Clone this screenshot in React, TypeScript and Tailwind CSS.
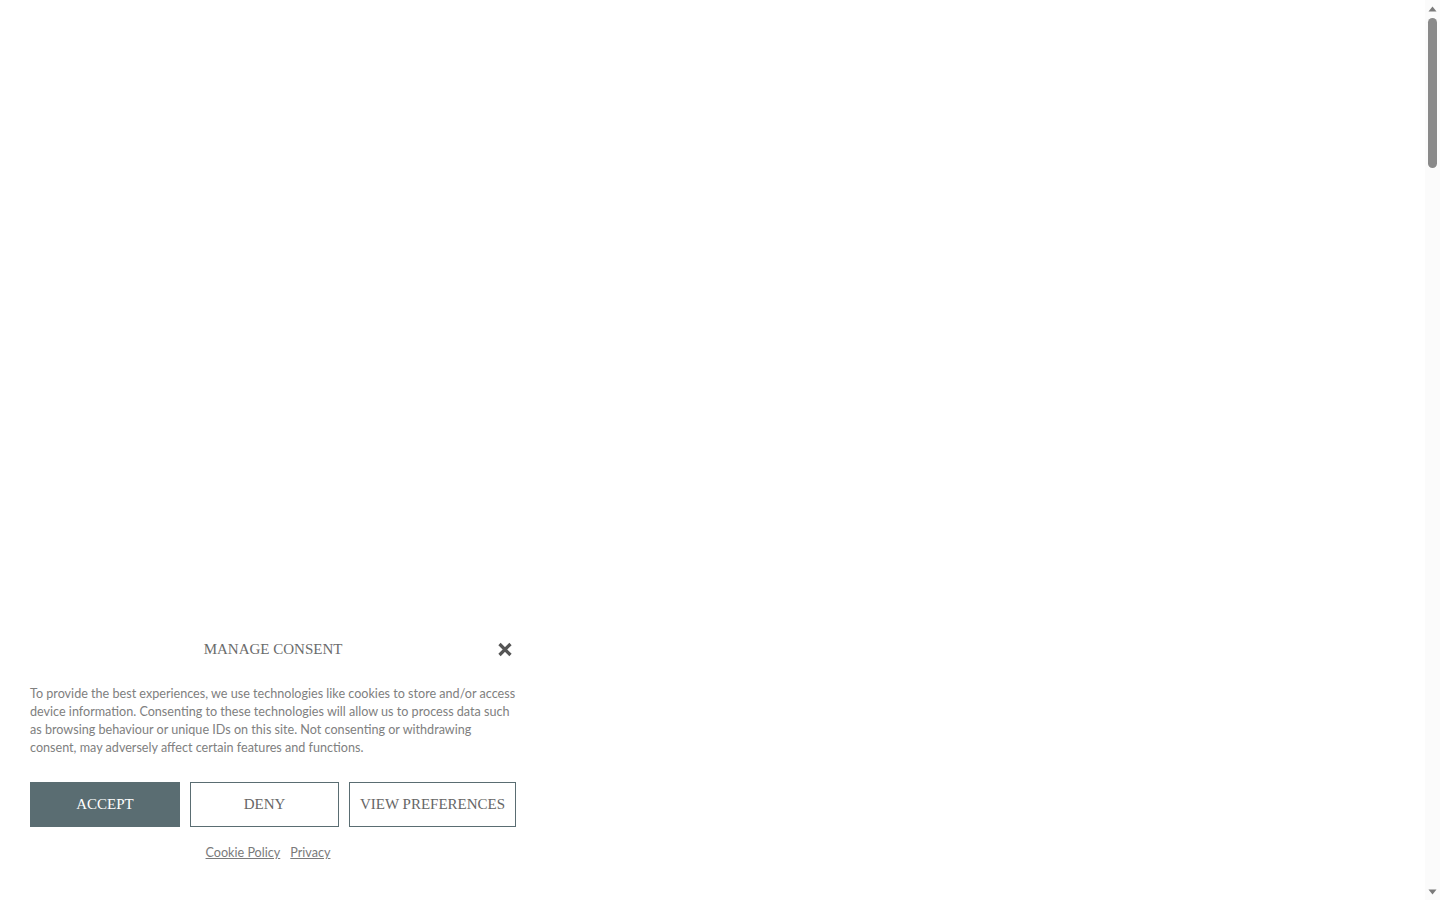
import React from "react";

function FakeScrollbar() {
  return (
    <div className="fixed right-0 top-0 z-40 flex h-screen w-[15px] flex-col items-center bg-[#fbfbfb]">
      <div className="flex h-[17px] w-full items-center justify-center">
        <svg width="9" height="6" viewBox="0 0 9 6">
          <path d="M0.5 5.5 L4.5 0.5 L8.5 5.5 Z" fill="#7a7a7a" />
        </svg>
      </div>
      <div className="mt-[1px] h-[150px] w-[9px] rounded-full bg-[#8a8a8a]" />
      <div className="flex-1" />
      <div className="flex h-[17px] w-full items-center justify-center">
        <svg width="9" height="6" viewBox="0 0 9 6">
          <path d="M0.5 0.5 L8.5 0.5 L4.5 5.5 Z" fill="#7a7a7a" />
        </svg>
      </div>
    </div>
  );
}

export default function App() {
  return (
    <div className="relative h-screen w-full overflow-hidden bg-white">
      <FakeScrollbar />
      <div className="fixed bottom-0 left-0 z-50 w-[546px] bg-white px-[30px] pt-[18px] pb-[38px]">
        <div className="flex items-center justify-between">
          <div className="w-[18px]" />
          <div className="flex-1 pl-[2px] text-center font-['Liberation_Serif',serif] text-[15px] leading-[26px] text-[#6b6b6b]">
            MANAGE CONSENT
          </div>
          <button className="mr-[2px] flex h-[26px] w-[18px] items-center justify-center" aria-label="close">
            <svg width="16" height="15" viewBox="0 0 16 15">
              <path d="M2.5 2 L13.5 13 M13.5 2 L2.5 13" stroke="#555" strokeWidth="3.2" strokeLinecap="butt" />
            </svg>
          </button>
        </div>
        <p className="mt-[23px] font-['Lato',sans-serif] text-[12.6px] leading-[18px] text-[#808080]">
          To provide the best experiences, we use technologies like cookies to store and/or access device information. Consenting to these technologies will allow us to process data such as browsing behaviour or unique IDs on this site. Not consenting or withdrawing consent, may adversely affect certain features and functions.
        </p>
        <div className="mt-[25px] flex gap-[10px]">
          <button className="h-[45px] w-[150px] bg-[#5a6d72] font-['Liberation_Serif',serif] text-[15px] text-white">
            ACCEPT
          </button>
          <button className="h-[45px] w-[149px] border border-[#5a6d72] bg-white font-['Liberation_Serif',serif] text-[15px] text-[#666]">
            DENY
          </button>
          <button className="h-[45px] flex-1 border border-[#5a6d72] bg-white font-['Liberation_Serif',serif] text-[15px] text-[#666]">
            VIEW PREFERENCES
          </button>
        </div>
        <div className="mt-[17px] flex justify-center gap-[10px] pr-[10px] font-['Lato',sans-serif] text-[12.6px] leading-[18px] text-[#7a7a7a]">
          <a className="underline" href="#">Cookie Policy</a>
          <a className="underline" href="#">Privacy</a>
        </div>
      </div>
    </div>
  );
}
